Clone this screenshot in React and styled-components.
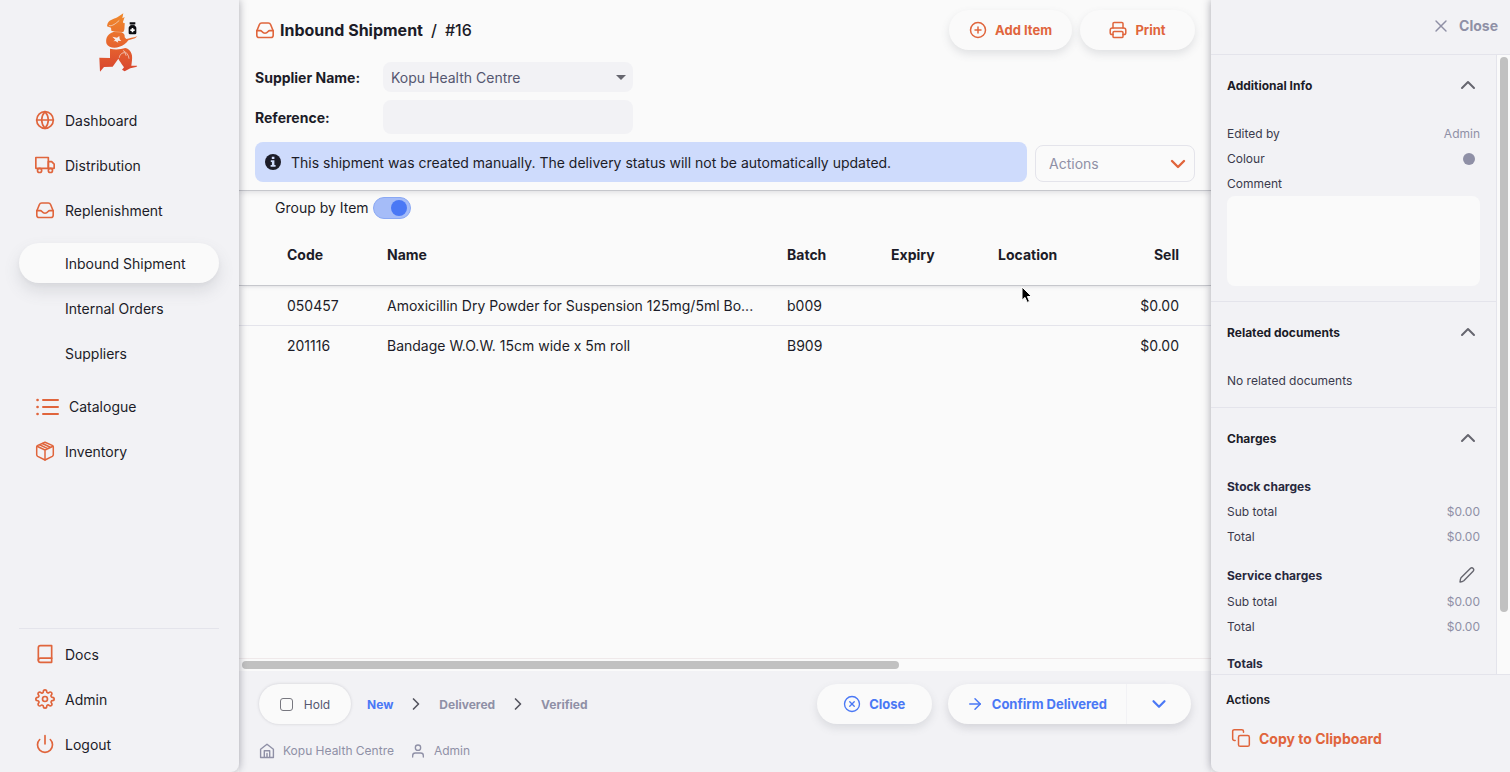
import React from 'react';
import styled, { createGlobalStyle, css } from 'styled-components';
import {
  FiGlobe, FiTruck, FiBook, FiSettings, FiPower, FiPlusCircle, FiXCircle,
  FiArrowRight, FiUser, FiCopy, FiX, FiChevronDown, FiChevronRight, FiChevronUp,
} from 'react-icons/fi';

const c = {
  bg: '#fafafa',
  menu: '#f2f2f5',
  text: '#1c1c28',
  mid: '#555770',
  grey: '#8f90a6',
  orange: '#e0653c',
  blue: '#4a78f5',
  line: '#e4e4eb',
};

const Global = createGlobalStyle`
  * { box-sizing: border-box; }
  body { margin: 0; background: ${c.bg}; }
  body, button, input, select, textarea { font-family: Inter, "Liberation Sans", sans-serif; color: ${c.text}; }
  button { border: 0; background: none; padding: 0; cursor: pointer; }
  a { color: inherit; text-decoration: none; }
  svg { display: block; flex-shrink: 0; }
`;

/* ---------- icons ---------- */
const Stroke = styled.svg.attrs({ fill: 'none', stroke: 'currentColor', strokeLinecap: 'round', strokeLinejoin: 'round' })``;

const InboxIcon = () => (
  <Stroke width="20" height="20" viewBox="0 0 20 20" strokeWidth="1.6">
    <path d="M1.800 11 4.300 4.800C4.800 3.500 5.500 3 6.700 3h6.600c1.200 0 1.900.5 2.400 1.800L18.200 11v4.200c0 1.600-.9 2.300-2.300 2.300H4.100c-1.400 0-2.300-.7-2.300-2.300z" />
    <path d="M1.800 10.600h3.700c1.400 0 1.600 2.700 4.500 2.700s3.100-2.700 4.500-2.700h3.700" />
  </Stroke>
);
const ListIcon = () => (
  <Stroke width="24" height="24" viewBox="0 0 24 24" strokeWidth="2">
    <path d="M8 6h15M8 13h15M8 20h15" />
    <path d="M2.500 6h.1M2.500 13h.1M2.500 20h.1" strokeWidth="2.600" />
  </Stroke>
);
const BoxIcon = () => (
  <Stroke width="20" height="20" viewBox="0 0 20 20" strokeWidth="1.500">
    <path d="M10 1.200 17.200 4.400c.8.4 1.100.8 1.100 1.700v7.600c0 .8-.3 1.300-1 1.700L10 19l-7.300-3.600c-.7-.4-1-.9-1-1.700V6.100c0-.9.3-1.300 1.100-1.700z" />
    <path d="M2 5.200 10 9l8-3.800M10 9v10M4.600 3.800l8.100 3.800M7.300 2.500l8.100 3.800" />
  </Stroke>
);
const PrinterIcon = () => (
  <Stroke width="18" height="18" viewBox="1 1 18 18" strokeWidth="1.500">
    <path d="M5 8V3.600c0-.8.4-1.200 1.200-1.200h7.600c.8 0 1.200.4 1.200 1.200V8" />
    <path d="M5 14.500H4c-1.200 0-1.800-.6-1.800-1.800v-2.500C2.200 8.700 2.900 8 4.300 8h11.400c1.400 0 2.100.7 2.100 2.200v2.500c0 1.200-.6 1.800-1.800 1.800h-1" />
    <path d="M6.200 11.600h7.600c.8 0 1.200.4 1.200 1.200v3.600c0 .8-.4 1.200-1.200 1.200H6.200c-.8 0-1.200-.4-1.200-1.200v-3.600c0-.8.4-1.200 1.200-1.200z" />
  </Stroke>
);
const HomeIcon = () => (
  <Stroke width="16" height="16" viewBox="0 0 16 16" strokeWidth="1.400">
    <path d="M1.600 6.200 8 1.200l6.400 5v8.300H1.600z" />
    <path d="M5.300 14.300V7.800h5.400v6.500M8 10.500v3.800" />
  </Stroke>
);
const PencilIcon = () => (
  <Stroke width="18" height="18" viewBox="0 0 18 18" strokeWidth="1.400">
    <path d="M2 16c.2-1.700.5-3.200 1-4.200L12.300 2.500c.9-.9 2.100-.9 2.900-.1s.8 2-.1 2.900L5.800 14.700C4.800 15.400 3.500 15.800 2 16z" />
  </Stroke>
);
const InfoIcon = () => (
  <svg width="16" height="16" viewBox="0 0 16 16">
    <circle cx="8" cy="8" r="8" fill={c.text} />
    <path d="M6.800 2.800h2.600v2.200H6.800zM5.800 6.300h3.600v4.800h1.200v1.600H5.600v-1.600h1.300V7.900H5.800z" fill="#d0dcfc" />
  </svg>
);
const Logo = () => (
  <svg width="40" height="60" viewBox="0 0 120 180" role="img" aria-label="Home">
    <defs>
      <linearGradient id="flame" gradientUnits="userSpaceOnUse" x1="0" y1="0" x2="0" y2="176">
        <stop offset="0" stopColor="#f08a2c" />
        <stop offset="0.5" stopColor="#e8682e" />
        <stop offset="1" stopColor="#d8452f" />
      </linearGradient>
    </defs>
    <g fill="url(#flame)">
      <path d="M73 1 55 13C44 20 27 18 24 40L36 44 37 53 48 56 73 57C78 50 76 43 77 34L78 31C74 31 72 29 72 26L77 12 70 16z" />
      <path d="M43 57 68 58C75 61 78 66 77 73L82 78C91 76 102 74 115 70L108 76 88 82C81 91 73 99 61 101 48 107 28 104 23 93 19 82 22 63 43 57z" />
      <path d="M33 107C50 111 65 109 79 105 94 108 102 123 99 142L97 158 112 158C116 158 115 160 111 162L94 166 77 175 69 170 75 163C67 151 61 143 58 137L41 161 15 162 3 176 1 134 33 135z" />
    </g>
    <path d="M40 71 54 74 61 69 62 79 67 84 56 83 58 89 49 84 43 85 49 80z" fill="#f6f0ef" />
    <g fill="none" stroke="#f4ece9" strokeLinecap="round">
      <path d="M31 38C40 40 50 32 60 23" strokeWidth="2" />
      <path d="M61 133C63 123 69 119 77 119M73 113C83 118 89 126 90 136M79 121 81 127" strokeWidth="2" />
    </g>
    <path d="M92 28h17v6h-2v4c3 1 5 4 5 7v15q0 4-4 4H93q-4 0-4-4V45c0-3 2-6 5-7v-4h-2z" fill="#0c0c10" />
    <path d="M98 45h5v4h4v5h-4v4h-5v-4h-4v-5h4z" fill="#fff" />
    <path d="M92 35h17" stroke="#bbb" strokeWidth="2" />
  </svg>
);

/* ---------- shell ---------- */
const Shell = styled.div`
  display: grid;
  grid-template-columns: 239px minmax(0, 1fr) 299px;
  height: 100vh;
  overflow: hidden;
  font-size: 14px;
`;

const Sidebar = styled.aside`
  display: flex;
  flex-direction: column;
  z-index: 2;
  padding: 13px 20px 8px 19px;
  background: ${c.menu};
  border-radius: 0 0 8px 0;
  box-shadow: 0 0 8px rgba(40, 41, 61, 0.4);
`;
const LogoLink = styled.a`
  align-self: center;
  margin-bottom: 27px;
`;
const NavList = styled.nav`
  display: flex;
  flex-direction: column;
  gap: 5px;
`;
const SubNav = styled(NavList)`
  padding: 8px 0;
`;
const BottomNav = styled(NavList)`
  margin-top: auto;
  padding-top: 5px;
  border-top: 1px solid ${c.line};
`;
const NavItem = styled.a`
  display: flex;
  align-items: center;
  gap: 10px;
  height: 40px;
  padding-left: ${p => (p.$sub ? 46 : 16)}px;
  border-radius: 20px;
  svg { color: ${c.orange}; }
  ${p => p.$active && css`
    background: ${c.bg};
    box-shadow: 0 8px 16px rgba(96, 97, 112, 0.16), 0 2px 4px rgba(40, 41, 61, 0.04);
  `}
`;

/* ---------- main ---------- */
const Main = styled.main`
  display: flex;
  flex-direction: column;
  min-width: 0;
  position: relative;
`;
const Header = styled.header`
  display: flex;
  flex-direction: column;
  height: 191px;
  padding: 10px 16px 8px;
  border-bottom: 1px solid #c6c7cc;
  box-shadow: 0 1px 6px rgba(96, 97, 112, 0.2);
`;
const TitleRow = styled.div`
  display: flex;
  align-items: center;
  gap: 8px;
  height: 40px;
`;
const Title = styled.h1`
  display: flex;
  align-items: center;
  gap: 5px;
  flex: 1;
  margin: 0;
  font-size: 16px;
  font-weight: 700;
  svg { color: ${c.orange}; }
`;
const Crumb = styled.span`
  font-weight: 500;
  margin-left: 3px;
`;
const Pill = styled.button`
  display: flex;
  align-items: center;
  justify-content: center;
  gap: 8px;
  height: 40px;
  min-width: 115px;
  padding: 0 20px;
  border-radius: 20px;
  background: ${c.bg};
  color: ${p => p.$tone};
  font-size: 13px;
  font-weight: 700;
  box-shadow: 0 4px 8px rgba(96, 97, 112, 0.16);
`;
const Field = styled.div`
  display: grid;
  grid-template-columns: 128px 250px;
  align-items: center;
  margin-top: ${p => p.$top}px;
`;
const Label = styled.label`
  font-weight: 700;
`;
const SelectWrap = styled.div`
  display: grid;
  align-items: center;
  > * { grid-area: 1 / 1; }
  svg { justify-self: end; margin-right: ${p => p.$inset}px; pointer-events: none; }
`;
const Select = styled.select`
  appearance: none;
  width: 100%;
  height: 30px;
  padding: 0 8px;
  border: 0;
  border-radius: 8px;
  background: ${c.menu};
  color: ${c.mid};
  font-size: 14px;
`;
const ActionSelect = styled(Select)`
  height: 37px;
  padding: 0 13px;
  border: 1px solid ${c.line};
  background: ${c.bg};
  color: ${c.grey};
`;
const TextBox = styled.input`
  height: 34px;
  padding: 0 8px;
  border: 0;
  border-radius: 8px;
  background: ${c.menu};
  font-size: 14px;
`;
const NoticeRow = styled.div`
  display: grid;
  grid-template-columns: minmax(0, 1fr) 160px;
  align-items: end;
  gap: 8px;
  margin-top: auto;
`;
const Notice = styled.div`
  display: flex;
  align-items: center;
  gap: 10px;
  height: 40px;
  padding: 0 10px;
  border-radius: 8px;
  background: #cedbfc;
`;

const Content = styled.section`
  display: flex;
  flex-direction: column;
  flex: 1;
  min-height: 0;
`;
const SwitchRow = styled.label`
  display: flex;
  align-items: center;
  gap: 4px;
  height: 33px;
  padding-left: 36px;
`;
const Switch = styled.input`
  appearance: none;
  display: flex;
  align-items: center;
  justify-content: flex-end;
  width: 38px;
  height: 22px;
  margin: 0;
  padding: 0 3px;
  border: 1px solid #8aa8f4;
  border-radius: 11px;
  background: #a5bcf8;
  &::before {
    content: '';
    width: 16px;
    height: 16px;
    border-radius: 50%;
    background: ${c.blue};
  }
`;
const Table = styled.table`
  width: 100%;
  table-layout: fixed;
  border-collapse: collapse;
`;
const Col = styled.col`
  width: ${p => p.$w}px;
`;
const HeadRow = styled.tr`
  height: 61px;
  border-bottom: 1px solid #c6c7cc;
  box-shadow: 0 4px 4px -3px rgba(96, 97, 112, 0.25);
`;
const Row = styled.tr`
  height: 40px;
  & + & { border-top: 1px solid ${c.line}; }
`;
const cell = css`
  padding: 0 16px;
  white-space: nowrap;
  text-align: ${p => p.$align || 'left'};
`;
const Th = styled.th`
  ${cell}
  font-weight: 700;
`;
const Td = styled.td`
  ${cell}
`;
const HTrack = styled.div`
  height: 13px;
  margin-top: auto;
  padding: 2px 3px;
  border-top: 1px solid #efe9ea;
`;
const HThumb = styled.div`
  width: 68%;
  height: 8px;
  border-radius: 4px;
  background: #c1c1c1;
`;

const Footer = styled.footer`
  display: flex;
  flex-direction: column;
  height: 101px;
  padding: 13px 20px 0;
  background: ${c.menu};
`;
const FooterRow = styled.div`
  display: flex;
  align-items: center;
  height: 40px;
`;
const Hold = styled.label`
  display: flex;
  align-items: center;
  justify-content: center;
  gap: 11px;
  width: 92px;
  height: 40px;
  margin-right: 16px;
  border-radius: 20px;
  background: ${c.bg};
  color: ${c.mid};
  font-size: 12px;
  box-shadow: 0 0 3px rgba(96, 97, 112, 0.25);
`;
const Check = styled.input`
  appearance: none;
  width: 13px;
  height: 13px;
  margin: 0;
  border: 1px solid #77777f;
  border-radius: 3px;
`;
const Steps = styled.ol`
  display: flex;
  align-items: center;
  flex: 1;
  gap: 13px;
  margin: 0;
  padding: 0;
  list-style: none;
`;
const Step = styled.li`
  display: flex;
  align-items: center;
  gap: 13px;
  color: ${p => (p.$on ? c.blue : c.grey)};
  font-size: 12px;
  font-weight: 700;
  svg { color: #55555f; }
`;
const Split = styled.div`
  display: flex;
  margin-left: 16px;
  border-radius: 20px;
  background: ${c.bg};
  box-shadow: 0 4px 8px rgba(96, 97, 112, 0.2);
`;
const SplitMain = styled.button`
  display: flex;
  align-items: center;
  gap: 8px;
  height: 40px;
  padding: 0 19px 0 18px;
  color: ${c.blue};
  font-size: 13px;
  font-weight: 700;
`;
const SplitMore = styled(SplitMain)`
  padding: 0 21px;
  border-left: 1px solid #f2f2f5;
`;
const StatusRow = styled.div`
  display: flex;
  gap: 16px;
  padding-top: 18px;
  color: ${c.grey};
  font-size: 12px;
`;
const Status = styled.span`
  display: flex;
  align-items: center;
  gap: 8px;
  line-height: 18px;
`;

/* ---------- details panel ---------- */
const Panel = styled.aside`
  display: flex;
  flex-direction: column;
  min-height: 0;
  z-index: 2;
  background: ${c.menu};
  border-radius: 0 0 0 8px;
  box-shadow: 0 0 8px rgba(40, 41, 61, 0.4);
  font-size: 12px;
`;
const PanelTop = styled.div`
  display: flex;
  justify-content: flex-end;
  height: 55px;
  padding: 0 12px 3px;
  border-bottom: 1px solid ${c.line};
`;
const CloseButton = styled.button`
  display: flex;
  align-items: center;
  gap: 8px;
  color: ${c.grey};
  font-size: 14px;
  font-weight: 700;
`;
const PanelBody = styled.div`
  display: grid;
  grid-template-columns: minmax(0, 1fr) 14px;
  flex: 1;
  min-height: 0;
  overflow: hidden;
`;
const Sections = styled.div`
  min-height: 0;
  overflow: hidden;
`;
const VTrack = styled.div`
  padding: 2px 2px 0 3px;
  border-left: 1px solid ${c.line};
  background: ${c.bg};
`;
const VThumb = styled.div`
  width: 8px;
  height: 90%;
  border-radius: 4px;
  background: #c1c1c1;
`;
const Section = styled.section`
  padding: 0 16px 14px;
  border-bottom: 1px solid ${c.line};
`;
const SectionToggle = styled.button`
  display: flex;
  align-items: center;
  justify-content: space-between;
  width: 100%;
  height: 60px;
  margin-bottom: 6px;
  font-size: 12px;
  font-weight: 700;
  svg { color: #66666f; }
`;
const Line = styled.div`
  display: flex;
  align-items: center;
  justify-content: space-between;
  height: 25px;
  color: #3a3a4c;
`;
const SubHead = styled(Line)`
  height: ${p => (p.$tall ? 28 : 25)}px;
  margin-top: ${p => (p.$first ? 0 : 12)}px;
  color: #28293d;
  font-weight: 700;
`;
const Value = styled.span`
  color: ${c.grey};
`;
const Dot = styled.button`
  width: 12px;
  height: 12px;
  margin-right: 5px;
  border-radius: 50%;
  background: ${c.grey};
`;
const EditButton = styled.button`
  margin-right: 4px;
  color: #66666f;
`;
const Comment = styled.textarea`
  display: block;
  width: 100%;
  height: 90px;
  margin: 0 0 15px;
  padding: 8px;
  border: 0;
  border-radius: 8px;
  background: ${c.bg};
  resize: none;
`;
const CommentSection = styled(Section)`
  padding-bottom: 0;
`;
const PanelActions = styled.div`
  height: 98px;
  padding: 17px 15px 0;
  border-top: 1px solid ${c.line};
`;
const ActionsTitle = styled.h2`
  margin: 0 0 12px;
  font-size: 12px;
  line-height: 16px;
  font-weight: 600;
`;
const CopyButton = styled.button`
  display: flex;
  align-items: center;
  gap: 8px;
  height: 36px;
  padding-left: 5px;
  color: ${c.orange};
  font-size: 14px;
  font-weight: 700;
`;
const Pointer = styled.svg`
  position: absolute;
  left: calc(81% - 5px);
  top: 286px;
`;

const shipments = [
  { code: '050457', name: 'Amoxicillin Dry Powder for Suspension 125mg/5ml Bo...', batch: 'b009', sell: '$0.00' },
  { code: '201116', name: 'Bandage W.O.W. 15cm wide x 5m roll', batch: 'B909', sell: '$0.00' },
];

const Charges = () => (
  <>
    <Line>Sub total <Value>$0.00</Value></Line>
    <Line>Total <Value>$0.00</Value></Line>
  </>
);

const Accordion = ({ title, as: Box = Section, children }) => (
  <Box>
    <SectionToggle>{title}<FiChevronUp size={24} strokeWidth={2} /></SectionToggle>
    {children}
  </Box>
);

export default function App() {
  return (
    <>
      <Global />
      <Shell>
        <Sidebar>
          <LogoLink href="#home"><Logo /></LogoLink>
          <NavList>
            <NavItem href="#dashboard"><FiGlobe size={20} strokeWidth={2} />Dashboard</NavItem>
            <NavItem href="#distribution"><FiTruck size={20} strokeWidth={2} />Distribution</NavItem>
            <NavItem href="#replenishment"><InboxIcon />Replenishment</NavItem>
            <SubNav>
              <NavItem href="#inbound" $sub $active>Inbound Shipment</NavItem>
              <NavItem href="#orders" $sub>Internal Orders</NavItem>
              <NavItem href="#suppliers" $sub>Suppliers</NavItem>
            </SubNav>
            <NavItem href="#catalogue"><ListIcon />Catalogue</NavItem>
            <NavItem href="#inventory"><BoxIcon />Inventory</NavItem>
          </NavList>
          <BottomNav>
            <NavItem href="#docs"><FiBook size={20} strokeWidth={2} />Docs</NavItem>
            <NavItem href="#admin"><FiSettings size={20} strokeWidth={2} />Admin</NavItem>
            <NavItem href="#logout"><FiPower size={20} strokeWidth={2} />Logout</NavItem>
          </BottomNav>
        </Sidebar>

        <Main>
          <Header>
            <TitleRow>
              <Title><InboxIcon />Inbound Shipment<Crumb>/</Crumb><Crumb>#16</Crumb></Title>
              <Pill $tone={c.orange}><FiPlusCircle size={18} strokeWidth={2} />Add Item</Pill>
              <Pill $tone={c.orange}><PrinterIcon />Print</Pill>
            </TitleRow>
            <Field $top={12}>
              <Label htmlFor="supplier">Supplier Name:</Label>
              <SelectWrap $inset={7}>
                <Select id="supplier"><option>Kopu Health Centre</option></Select>
                <svg width="10" height="5" viewBox="0 0 10 5"><path d="M0 0h10L5 5z" fill="#66666f" /></svg>
              </SelectWrap>
            </Field>
            <Field $top={8}>
              <Label htmlFor="reference">Reference:</Label>
              <TextBox id="reference" type="text" />
            </Field>
            <NoticeRow>
              <Notice role="status"><InfoIcon />This shipment was created manually. The delivery status will not be automatically updated.</Notice>
              <SelectWrap $inset={5}>
                <ActionSelect aria-label="Actions"><option>Actions</option></ActionSelect>
                <FiChevronDown size={24} color={c.orange} strokeWidth={2.4} />
              </SelectWrap>
            </NoticeRow>
          </Header>

          <Content>
            <SwitchRow>Group by Item<Switch type="checkbox" role="switch" defaultChecked /></SwitchRow>
            <Table>
              <colgroup>
                <Col $w={32} /><Col $w={100} /><Col $w={400} /><Col $w={104} /><Col $w={107} /><Col $w={108} /><Col $w={105} /><Col $w={16} />
              </colgroup>
              <thead>
                <HeadRow>
                  <td />
                  <Th>Code</Th><Th>Name</Th><Th>Batch</Th><Th>Expiry</Th><Th>Location</Th><Th $align="right">Sell</Th>
                  <td />
                </HeadRow>
              </thead>
              <tbody>
                {shipments.map(s => (
                  <Row key={s.code}>
                    <td />
                    <Td>{s.code}</Td><Td>{s.name}</Td><Td>{s.batch}</Td><Td /><Td /><Td $align="right">{s.sell}</Td>
                    <td />
                  </Row>
                ))}
              </tbody>
            </Table>
            <HTrack><HThumb /></HTrack>
          </Content>

          <Footer>
            <FooterRow>
              <Hold><Check type="checkbox" />Hold</Hold>
              <Steps>
                <Step $on>New<FiChevronRight size={20} /></Step>
                <Step>Delivered<FiChevronRight size={20} /></Step>
                <Step>Verified</Step>
              </Steps>
              <Pill $tone={c.blue}><FiXCircle size={18} strokeWidth={1.8} />Close</Pill>
              <Split>
                <SplitMain><FiArrowRight size={18} />Confirm Delivered</SplitMain>
                <SplitMore aria-label="More statuses"><FiChevronDown size={22} strokeWidth={2.4} /></SplitMore>
              </Split>
            </FooterRow>
            <StatusRow>
              <Status><HomeIcon />Kopu Health Centre</Status>
              <Status><FiUser size={16} strokeWidth={2} />Admin</Status>
            </StatusRow>
          </Footer>

          <Pointer width="12" height="18" viewBox="0 0 12 18">
            <path d="M1 1v13.200l3-2.800 2.200 5 2.300-1L6.400 10.500h4.200z" fill="#000" stroke="#fff" strokeWidth="1" />
          </Pointer>
        </Main>

        <Panel>
          <PanelTop>
            <CloseButton><FiX size={20} strokeWidth={1.7} />Close</CloseButton>
          </PanelTop>
          <PanelBody>
            <Sections>
              <Accordion title="Additional Info" as={CommentSection}>
                <Line>Edited by <Value>Admin</Value></Line>
                <Line>Colour <Dot aria-label="Colour" /></Line>
                <Line as="label" htmlFor="comment">Comment</Line>
                <Comment id="comment" />
              </Accordion>
              <Accordion title="Related documents">
                <Line>No related documents</Line>
              </Accordion>
              <Accordion title="Charges">
                <SubHead $first>Stock charges</SubHead>
                <Charges />
                <SubHead $tall>Service charges<EditButton aria-label="Edit service charges"><PencilIcon /></EditButton></SubHead>
                <Charges />
                <SubHead>Totals</SubHead>
              </Accordion>
            </Sections>
            <VTrack><VThumb /></VTrack>
          </PanelBody>
          <PanelActions>
            <ActionsTitle>Actions</ActionsTitle>
            <CopyButton><FiCopy size={20} strokeWidth={1.8} />Copy to Clipboard</CopyButton>
          </PanelActions>
        </Panel>
      </Shell>
    </>
  );
}
